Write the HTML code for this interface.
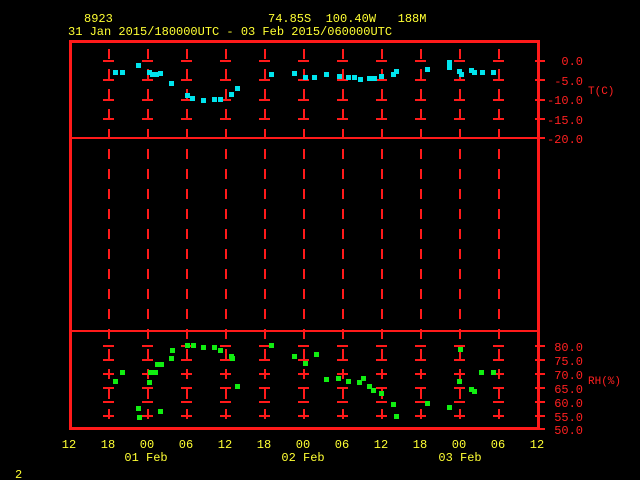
<!DOCTYPE html>
<html><head><style>
html,body{margin:0;padding:0;background:#000;width:640px;height:480px;overflow:hidden}
svg{display:block}
text{font-family:"Liberation Mono",monospace;font-size:12px}
.y{fill:#ffff33}.r{fill:#ff2020}
</style></head><body>
<svg width="640" height="480" xmlns="http://www.w3.org/2000/svg">
<text class="y" x="84" y="22">8923</text>
<text class="y" x="268" y="22" xml:space="preserve">74.85S  100.40W   188M</text>
<text class="y" x="68" y="35" xml:space="preserve">31 Jan 2015/180000UTC - 03 Feb 2015/060000UTC</text>
<g stroke="#ff1a1a" stroke-width="2" fill="none">
<g stroke-dasharray="10,10">
<path d="M109 49V427M148 49V427M187 49V427M226 49V427M265 49V427M304 49V427M343 49V427M382 49V427M421 49V427M460 49V427M499 49V427"/>
</g>
<path d="M70 138H545M70 331H540"/>
<path id="cr" d="M103 61h11M103 80h11M103 100h11M103 119h11M103 346h11M103 360h11M103 374h11M103 388h11M103 402h11M103 416h11"/>
<use href="#cr" x="39"/><use href="#cr" x="78"/><use href="#cr" x="117"/><use href="#cr" x="156"/><use href="#cr" x="195"/><use href="#cr" x="234"/><use href="#cr" x="273"/><use href="#cr" x="312"/><use href="#cr" x="351"/><use href="#cr" x="390"/>
<path d="M535 61h10M535 80h10M535 100h10M535 119h10M535 346h10M535 360h10M535 374h10M535 388h10M535 402h10M535 416h10M535 429h10"/>
</g>
<rect x="70.5" y="41.5" width="468" height="387" fill="none" stroke="#ff1a1a" stroke-width="3"/>
<g class="r" text-anchor="end">
<text x="583" y="65">0.0</text><text x="583" y="85">-5.0</text><text x="583" y="104">-10.0</text><text x="583" y="124">-15.0</text><text x="583" y="143">-20.0</text>
<text x="583" y="351">80.0</text><text x="583" y="365">75.0</text><text x="583" y="379">70.0</text><text x="583" y="393">65.0</text><text x="583" y="407">60.0</text><text x="583" y="421">55.0</text><text x="583" y="434">50.0</text>
</g>
<text class="r" x="588" y="94" style="font-size:11px">T(C)</text>
<text class="r" x="588" y="384" style="font-size:11px">RH(%)</text>
<g class="y" text-anchor="middle">
<text x="69" y="448">12</text><text x="108" y="448">18</text><text x="147" y="448">00</text><text x="186" y="448">06</text><text x="225" y="448">12</text><text x="264" y="448">18</text><text x="303" y="448">00</text><text x="342" y="448">06</text><text x="381" y="448">12</text><text x="420" y="448">18</text><text x="459" y="448">00</text><text x="498" y="448">06</text><text x="537" y="448">12</text>
<text x="146" y="461">01 Feb</text><text x="303" y="461">02 Feb</text><text x="460" y="461">03 Feb</text>
</g>
<text class="y" x="15" y="478">2</text>
<g fill="#00e5ee">
<rect x="113" y="70" width="5" height="5"/><rect x="120" y="70" width="5" height="5"/><rect x="136" y="63" width="5" height="5"/><rect x="147" y="70" width="5" height="5"/><rect x="150" y="72" width="5" height="5"/><rect x="154" y="72" width="5" height="5"/><rect x="158" y="71" width="5" height="5"/><rect x="169" y="81" width="5" height="5"/><rect x="185" y="93" width="5" height="5"/><rect x="190" y="96" width="5" height="5"/><rect x="201" y="98" width="5" height="5"/><rect x="212" y="97" width="5" height="5"/><rect x="218" y="97" width="5" height="5"/><rect x="229" y="92" width="5" height="5"/><rect x="235" y="86" width="5" height="5"/><rect x="269" y="72" width="5" height="5"/><rect x="292" y="71" width="5" height="5"/><rect x="303" y="75" width="5" height="5"/><rect x="312" y="75" width="5" height="5"/><rect x="324" y="72" width="5" height="5"/><rect x="337" y="74" width="5" height="5"/><rect x="346" y="75" width="5" height="5"/><rect x="352" y="75" width="5" height="5"/><rect x="358" y="77" width="5" height="5"/><rect x="367" y="76" width="5" height="5"/><rect x="372" y="76" width="5" height="5"/><rect x="379" y="74" width="5" height="5"/><rect x="391" y="72" width="5" height="5"/><rect x="394" y="69" width="5" height="5"/><rect x="425" y="67" width="5" height="5"/><rect x="447" y="60" width="5" height="5"/><rect x="447" y="65" width="5" height="5"/><rect x="457" y="69" width="5" height="5"/><rect x="459" y="72" width="5" height="5"/><rect x="469" y="68" width="5" height="5"/><rect x="472" y="70" width="5" height="5"/><rect x="480" y="70" width="5" height="5"/><rect x="491" y="70" width="5" height="5"/>
</g>
<g fill="#11ee11">
<rect x="113" y="379" width="5" height="5"/><rect x="120" y="370" width="5" height="5"/><rect x="136" y="406" width="5" height="5"/><rect x="137" y="415" width="5" height="5"/><rect x="147" y="380" width="5" height="5"/><rect x="148" y="370" width="5" height="5"/><rect x="153" y="370" width="5" height="5"/><rect x="155" y="362" width="5" height="5"/><rect x="159" y="362" width="5" height="5"/><rect x="158" y="409" width="5" height="5"/><rect x="169" y="356" width="5" height="5"/><rect x="170" y="348" width="5" height="5"/><rect x="185" y="343" width="5" height="5"/><rect x="191" y="343" width="5" height="5"/><rect x="201" y="345" width="5" height="5"/><rect x="212" y="345" width="5" height="5"/><rect x="218" y="348" width="5" height="5"/><rect x="229" y="354" width="5" height="5"/><rect x="230" y="356" width="5" height="5"/><rect x="235" y="384" width="5" height="5"/><rect x="269" y="343" width="5" height="5"/><rect x="292" y="354" width="5" height="5"/><rect x="303" y="361" width="5" height="5"/><rect x="314" y="352" width="5" height="5"/><rect x="324" y="377" width="5" height="5"/><rect x="336" y="376" width="5" height="5"/><rect x="346" y="379" width="5" height="5"/><rect x="357" y="380" width="5" height="5"/><rect x="361" y="376" width="5" height="5"/><rect x="367" y="384" width="5" height="5"/><rect x="371" y="388" width="5" height="5"/><rect x="379" y="391" width="5" height="5"/><rect x="391" y="402" width="5" height="5"/><rect x="394" y="414" width="5" height="5"/><rect x="425" y="401" width="5" height="5"/><rect x="447" y="405" width="5" height="5"/><rect x="458" y="347" width="5" height="5"/><rect x="457" y="379" width="5" height="5"/><rect x="469" y="387" width="5" height="5"/><rect x="472" y="389" width="5" height="5"/><rect x="479" y="370" width="5" height="5"/><rect x="491" y="370" width="5" height="5"/>
</g>
</svg>
</body></html>
